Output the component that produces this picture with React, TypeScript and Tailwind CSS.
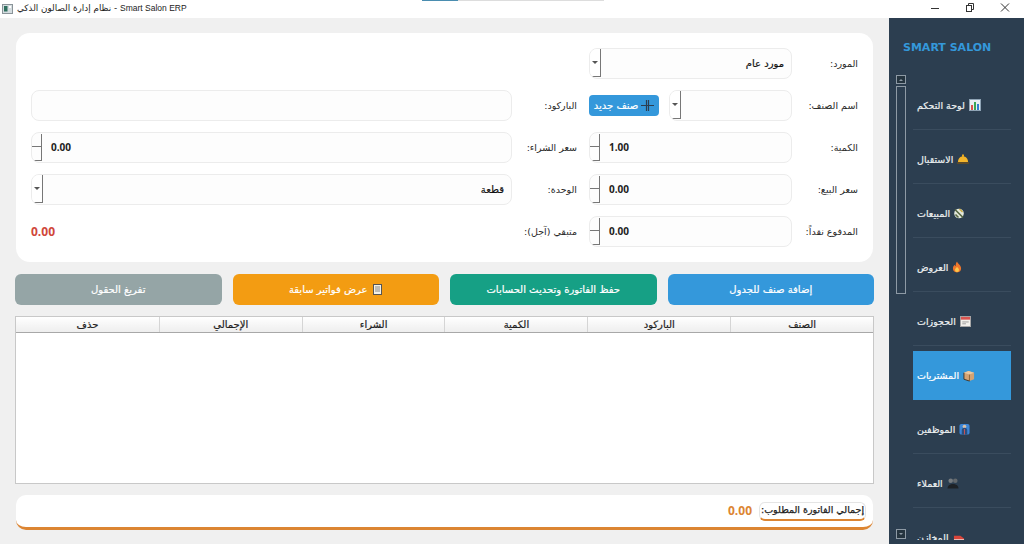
import React, { FC, ReactNode } from "react";

const FONT = "font-['DejaVu_Sans',sans-serif]";

const Field: FC<{ className?: string; children?: ReactNode }> = ({ className, children }) => (
  <div className={`flex h-[31px] items-stretch overflow-hidden rounded-[8px] border border-[#ececec] bg-[#fdfdfd] ${className}`}>
    {children}
  </div>
);

const Label: FC<{ text: string; className: string }> = ({ text, className }) => (
  <div dir="rtl" className={`flex h-[31px] items-center whitespace-nowrap pt-px text-[9.5px] text-[#2a2a2a] ${className}`}>{text}</div>
);

const Spin: FC<{ value: string; className?: string }> = ({ value, className }) => (
  <Field className={className}>
    <div className="my-px flex w-[10px] shrink-0 flex-col border-b border-r border-[#777777]">
      <div className="h-[13px] border-b border-[#777777]" />
      <div className="flex-1" />
    </div>
    <div className="flex flex-1 items-center pl-[9px] font-['Open_Sans',sans-serif] text-[10px] font-bold text-[#222222]">{value}</div>
  </Field>
);

const Combo: FC<{ value?: string; className?: string }> = ({ value, className }) => (
  <Field className={className}>
    <div className="mb-px flex w-[11px] shrink-0 items-center justify-center border-b border-r border-[#777777] bg-white">
      <div className="h-0 w-0 border-x-[3px] border-t-[3px] border-x-transparent border-t-[#555555]" />
    </div>
    <div dir="rtl" className="flex flex-1 items-center pr-[7px] text-[10px] text-[#111111] [-webkit-text-stroke:0.2px]">{value}</div>
  </Field>
);

const ChartIcon = () => (
  <svg width="12" height="12" viewBox="0 0 12 12">
    <rect x="0.5" y="0.5" width="11" height="11" fill="#e8eef4" stroke="#8fa3b5" />
    <rect x="2" y="6" width="2" height="5" fill="#d9534f" />
    <rect x="5" y="3" width="2" height="8" fill="#3aa655" />
    <rect x="8" y="5" width="2" height="6" fill="#2f7fd1" />
  </svg>
);
const BellIcon = () => (
  <svg width="12" height="10" viewBox="0 0 12 10">
    <path d="M1 8C1 4.500 3 2.500 6 2.500S11 4.500 11 8z" fill="#f3b52c" />
    <rect x="5" y="0.500" width="2" height="2.500" fill="#e8a81f" />
    <rect x="0" y="8" width="12" height="2" rx="0.500" fill="#5b4a2a" />
  </svg>
);
const SatelliteIcon = () => (
  <svg width="10" height="11" viewBox="0 0 10 11">
    <circle cx="5" cy="5.500" r="4.800" fill="#e3e8dc" />
    <path d="M1 1.500l8 8M1.500 6.500l3 3" stroke="#556642" strokeWidth="1.600" />
    <path d="M5.500 1l3 3" stroke="#c9a93f" strokeWidth="1.400" />
  </svg>
);
const FireIcon = () => (
  <svg width="10" height="12" viewBox="0 0 11 13">
    <path d="M5.500 0.500c.6 2.500 4.500 4 4.500 7.500a4.500 4.500 0 0 1-9 0c0-2 1-3 2-4 .2 1 .6 1.400 1.100 1.600C3.800 4 4.500 2 5.500 .5z" fill="#f0762b" />
    <path d="M5.500 6.500c1.500 1.300 2.200 2.200 2.200 3.200a2.200 2.200 0 0 1-4.400 0c0-1 1-2 2.200-3.200z" fill="#fbc84a" />
  </svg>
);
const CalendarIcon = () => (
  <svg width="11" height="11" viewBox="0 0 12 12">
    <rect x="0.500" y="0.500" width="11" height="11" fill="#f3f1ec" stroke="#a8a8a8" />
    <rect x="1" y="1" width="10" height="3" fill="#d9534f" />
    <path d="M2.500 6.500h7M2.500 8.500h4" stroke="#9a9a9a" />
  </svg>
);
const BoxIcon = () => (
  <svg width="12" height="12" viewBox="0 0 13 12">
    <path d="M1 2.500L6 .5l6 2v7l-5 2-6-2z" fill="#d4a373" />
    <path d="M1 2.500l6 2 5-2-6-2z" fill="#e9c9a2" />
    <path d="M7 4.500v7" stroke="#8a6238" />
    <path d="M1 2.500v7l6 2" fill="none" stroke="#3a3128" />
  </svg>
);
const StaffIcon = () => (
  <svg width="11" height="12" viewBox="0 0 12 13">
    <rect x="0.500" y="1" width="11" height="11.500" rx="2" fill="#3d86d6" />
    <circle cx="6" cy="3.800" r="2" fill="#d8c0a8" />
    <path d="M3 12.500V8a3 3 0 0 1 6 0v4.500z" fill="#2c4f7c" />
    <path d="M5.500 6.500h1v6h-1z" fill="#d9534f" />
  </svg>
);
const PeopleIcon = () => (
  <svg width="12" height="11" viewBox="0 0 13 12">
    <circle cx="4" cy="3" r="2.500" fill="#757a7e" />
    <circle cx="9" cy="3" r="2.500" fill="#63686c" />
    <path d="M.5 11.500c0-6.500 12-6.500 12 0z" fill="#1e2226" />
  </svg>
);
const ToolIcon = () => (
  <svg width="12" height="11" viewBox="0 0 13 12">
    <path d="M1 4h7l4 3v4H1z" fill="#d9453a" />
    <rect x="1" y="8" width="11" height="2" fill="#f2f2f2" />
  </svg>
);

const NAV: { label: string; icon: ReactNode; active?: boolean }[] = [
  { label: "لوحة التحكم", icon: <ChartIcon /> },
  { label: "الاستقبال", icon: <BellIcon /> },
  { label: "المبيعات", icon: <SatelliteIcon /> },
  { label: "العروض", icon: <FireIcon /> },
  { label: "الحجوزات", icon: <CalendarIcon /> },
  { label: "المشتريات", icon: <BoxIcon />, active: true },
  { label: "الموظفين", icon: <StaffIcon /> },
  { label: "العملاء", icon: <PeopleIcon /> },
  { label: "المخازن", icon: <ToolIcon /> },
];

const COLUMNS = ["حذف", "الإجمالي", "الشراء", "الكمية", "الباركود", "الصنف"];

const ACTIONS = [
  { label: "تفريغ الحقول", color: "bg-[#95a5a6]" },
  { label: "عرض فواتير سابقة", color: "bg-[#f39c12]", doc: true },
  { label: "حفظ الفاتورة وتحديث الحسابات", color: "bg-[#16a085]" },
  { label: "إضافة صنف للجدول", color: "bg-[#3498db]" },
];

const App: FC = () => {
  return (
    <div className={`relative flex h-[544px] w-[1024px] flex-col overflow-hidden bg-[#f0f0f0] ${FONT}`}>
      {/* strip of another window over the title bar */}
      <div className="absolute left-[422px] top-0 flex h-[1px]">
        <div className="w-[36px] bg-[#4a8db0]" />
        <div className="w-[146px] bg-[#dddddd]" />
      </div>

      <div className="flex h-[18px] shrink-0 items-center bg-white pl-[2px]">
        <svg width="11" height="10" viewBox="0 0 11 10">
          <rect x="0.500" y="0.500" width="10" height="9" fill="#d5dde0" stroke="#8a9499" />
          <rect x="2" y="2" width="3.500" height="5.500" fill="#2f6f5e" />
          <rect x="7" y="2" width="2" height="2" fill="#ffffff" />
        </svg>
        <div className="ml-[4px] whitespace-nowrap text-[8.8px] text-[#222222]">
          نظام إدارة الصالون الذكي - <span className="font-['Liberation_Sans',sans-serif] text-[8.5px]">Smart Salon ERP</span>
        </div>
        <div className="mb-[2px] ml-auto flex items-center">
          <svg width="34" height="14" viewBox="0 0 34 14"><path d="M12 7.500h8" stroke="#333333" /></svg>
          <svg width="34" height="14" viewBox="0 0 34 14" fill="none" stroke="#333333">
            <rect x="13.500" y="4.500" width="5" height="6" />
            <path d="M15.500 4.500v-2h5v6h-2" />
          </svg>
          <svg width="37" height="14" viewBox="0 0 37 14" stroke="#333333"><path d="M14 2.500l8 8M22 2.500l-8 8" /></svg>
        </div>
      </div>

      <div className="flex min-h-0 flex-1">
        <main className="flex w-[889px] shrink-0 flex-col px-[15px] pt-[15px]">
          <div className="mx-px flex h-[229px] flex-col gap-[11px] rounded-[14px] bg-white p-[15px]">
            <div className="flex">
              <div className="w-[558px]" />
              <Combo value="مورد عام" className="w-[203px]" />
              <Label text="المورد:" className="w-[66px]" />
            </div>
            <div className="flex">
              <Field className="w-[481px]" />
              <Label text="الباركود:" className="w-[65px]" />
              <div className="w-[12px]" />
              <div className="flex w-[203px] items-center justify-between">
                <button className="flex h-[21px] w-[70px] items-center justify-center gap-[3px] rounded-[4px] bg-[#3498db] text-[10px] text-white [-webkit-text-stroke:0.2px]">
                  <span dir="rtl">صنف جديد</span>
                  <svg width="13" height="11" viewBox="0 0 13 11" stroke="#2c3e50" strokeWidth="1.200">
                    <path d="M0 5.500h13M5.500 0v11M7.500 0v11" />
                  </svg>
                </button>
                <Combo className="w-[123px]" />
              </div>
              <Label text="اسم الصنف:" className="w-[66px]" />
            </div>
            <div className="flex">
              <Spin value="0.00" className="w-[481px]" />
              <Label text="سعر الشراء:" className="w-[65px]" />
              <div className="w-[12px]" />
              <Spin value="1.00" className="w-[203px]" />
              <Label text="الكمية:" className="w-[66px]" />
            </div>
            <div className="flex">
              <Combo value="قطعة" className="w-[481px]" />
              <Label text="الوحدة:" className="w-[65px]" />
              <div className="w-[12px]" />
              <Spin value="0.00" className="w-[203px]" />
              <Label text="سعر البيع:" className="w-[66px]" />
            </div>
            <div className="flex">
              <div className="flex h-[31px] w-[481px] items-center font-['Open_Sans',sans-serif] text-[12px] font-bold text-[#d0473a]">0.00</div>
              <Label text="متبقي (آجل):" className="w-[65px]" />
              <div className="w-[12px]" />
              <Spin value="0.00" className="w-[203px]" />
              <Label text="المدفوع نقداً:" className="w-[66px]" />
            </div>
          </div>

          <div className="mt-[12px] flex gap-[11px]">
            {ACTIONS.map((a) => (
              <button key={a.label} className={`flex h-[31px] flex-1 items-center justify-center gap-[4px] rounded-[6px] text-[10px] text-white [-webkit-text-stroke:0.2px] ${a.color}`}>
                {a.doc && (
                  <svg width="11" height="11" viewBox="0 0 11 11" className="order-2">
                    <rect x="1.500" y="0.500" width="8" height="10" fill="#f4f1e6" stroke="#555555" />
                    <path d="M3 3h5M3 5h5M3 7h5" stroke="#888888" />
                  </svg>
                )}
                <span dir="rtl">{a.label}</span>
              </button>
            ))}
          </div>

          <div className="mt-[11px] flex h-[168px] flex-col border border-[#c8c8c8] bg-white">
            <div className="grid h-[16px] shrink-0 grid-cols-6 border-b border-[#a8a8a8] bg-gradient-to-b from-white to-[#eeeeee]">
              {COLUMNS.map((c, i) => (
                <div key={c} dir="rtl" className={`flex items-center justify-center text-[10px] text-[#222222] [-webkit-text-stroke:0.2px] ${i > 0 ? "border-l border-[#d5d5d5]" : ""}`}>{c}</div>
              ))}
            </div>
          </div>

          <div className="mx-px mt-[11px] flex h-[35px] items-center justify-end gap-[7px] rounded-[10px] border-b-[3px] border-[#dc8532] bg-white pr-[7px]">
            <div className="font-['Open_Sans',sans-serif] text-[12px] font-bold text-[#dc8532]">0.00</div>
            <div dir="rtl" className="flex h-[19px] w-[107px] items-center justify-center whitespace-nowrap rounded-[6px] border border-b-[2px] border-[#e5e5e5] border-b-[#dc8532] text-[9.5px] text-[#222222] [-webkit-text-stroke:0.25px]">إجمالي الفاتورة المطلوب:</div>
          </div>
        </main>

        <aside className="flex min-w-0 flex-1 flex-col bg-[#2c3e50] pb-[4px]">
          <div className="flex h-[57px] shrink-0 items-start pl-[14px] pt-[23px] text-[11px] font-extrabold leading-[13px] text-[#3498db]">SMART SALON</div>
          <div className="flex min-h-0 flex-1 gap-[7px] pl-[7px]">
            <div className="mb-px flex w-[10px] shrink-0 flex-col gap-[2px]">
              <div className="flex h-[9px] items-center justify-center border border-[#8e9aa5] bg-[#25343f]">
                <div className="h-0 w-0 border-x-[2px] border-b-[2px] border-x-transparent border-b-[#8e9aa5]" />
              </div>
              <div className="h-[208px] border border-[#8e9aa5]" />
              <div className="flex-1" />
              <div className="flex h-[10px] items-center justify-center border border-[#8e9aa5] bg-[#25343f]">
                <div className="h-0 w-0 border-x-[2px] border-t-[2px] border-x-transparent border-t-[#8e9aa5]" />
              </div>
            </div>
            <div className="min-h-0 w-[98px] overflow-hidden pt-px">
              {NAV.map((n) => (
                <div
                  key={n.label}
                  dir="rtl"
                  className={`mt-[5px] flex h-[49px] items-center justify-end gap-[4px] pl-[4px] text-[9.5px] text-[#ecf0f1] [-webkit-text-stroke:0.2px] ${
                    n.active ? "bg-[#3498db] text-white" : "border-b border-[#3a4c5e]"
                  }`}
                >
                  {n.icon}
                  <span className="mt-[2px]">{n.label}</span>
                </div>
              ))}
            </div>
          </div>
        </aside>
      </div>
    </div>
  );
};

export default App;
